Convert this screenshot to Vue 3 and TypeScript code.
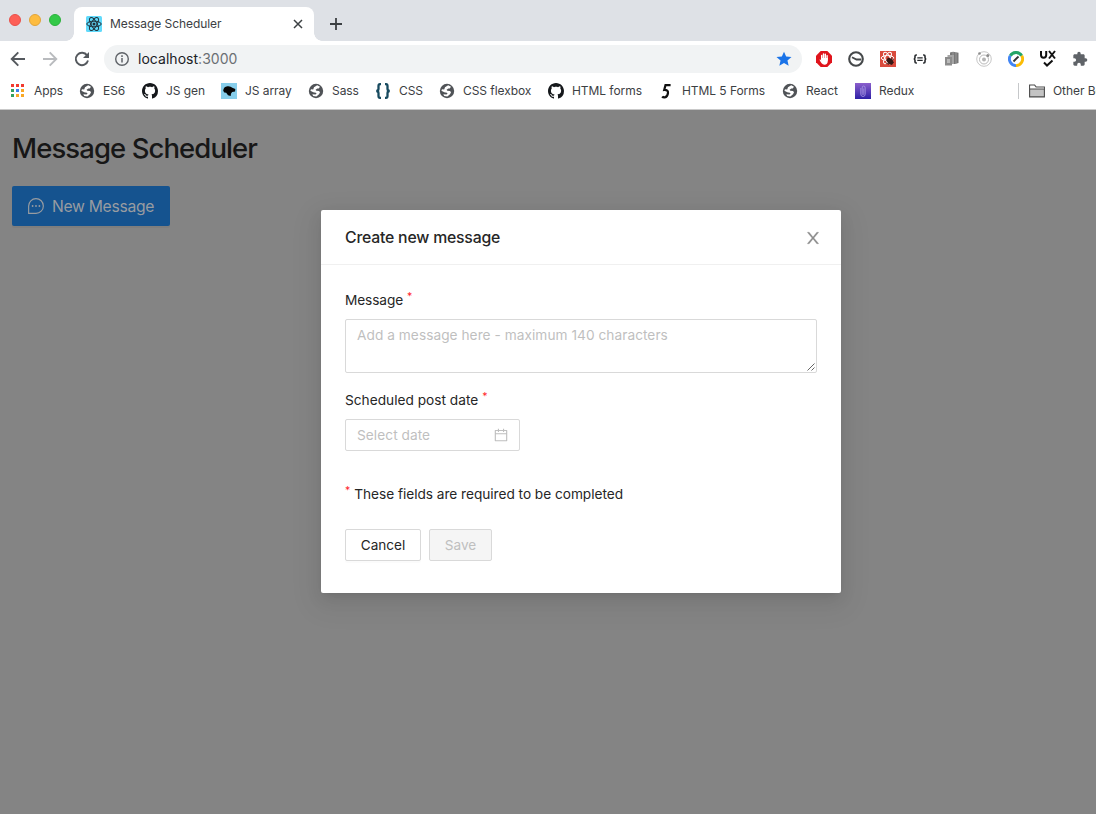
<script setup lang="ts">
interface Bookmark {
  kind: string
  label: string
}

const bookmarks: Bookmark[] = [
  { kind: 'apps', label: 'Apps' },
  { kind: 'globe', label: 'ES6' },
  { kind: 'github', label: 'JS gen' },
  { kind: 'bird', label: 'JS array' },
  { kind: 'globe', label: 'Sass' },
  { kind: 'braces', label: 'CSS' },
  { kind: 'globe', label: 'CSS flexbox' },
  { kind: 'github', label: 'HTML forms' },
  { kind: 'five', label: 'HTML 5 Forms' },
  { kind: 'globe', label: 'React' },
  { kind: 'clip', label: 'Redux' },
]

const appColors = ['#f23a2f', '#f23a2f', '#f23a2f', '#34a060', '#3b82f0', '#f9a825', '#34a060', '#f9a825', '#f9a825']
</script>

<template>
  <div class="window">
    <header class="tabstrip">
      <div class="lights"><i class="red"></i><i class="amber"></i><i class="green"></i></div>
      <div class="tab">
        <svg class="favicon" width="16" height="16" viewBox="0 0 16 16">
          <rect width="16" height="16" rx="1.500" fill="#61dafb" />
          <g fill="none" stroke="#20303a" stroke-width="1">
            <ellipse cx="8" cy="8" rx="7.200" ry="2.800" />
            <ellipse cx="8" cy="8" rx="7.200" ry="2.800" transform="rotate(60 8 8)" />
            <ellipse cx="8" cy="8" rx="7.200" ry="2.800" transform="rotate(120 8 8)" />
          </g>
          <circle cx="8" cy="8" r="1.500" fill="#20303a" />
        </svg>
        <span class="tab-title">Message Scheduler</span>
        <svg class="tab-close" width="10" height="10" viewBox="0 0 10 10"><path d="M1 1l8 8M9 1L1 9" stroke="#3c4043" stroke-width="1.500" /></svg>
      </div>
      <svg class="tab-add" width="12" height="12" viewBox="0 0 12 12"><path d="M6 0v12M0 6h12" stroke="#3c4043" stroke-width="1.800" /></svg>
    </header>

    <div class="toolbar">
      <div class="nav">
        <svg width="16" height="16" viewBox="0 0 16 16" fill="none" stroke="#55595e" stroke-width="1.900"><path d="M15 8H2.200M8.300 1.300L1.700 8l6.600 6.700" /></svg>
        <svg width="16" height="16" viewBox="0 0 16 16" fill="none" stroke="#b9bbbe" stroke-width="1.900"><path d="M1 8h12.800M7.700 1.300L14.300 8l-6.600 6.700" /></svg>
        <svg width="16" height="16" viewBox="0 0 16 16"><path d="M13.100 4.400A6.200 6.200 0 1 0 14 9.600" fill="none" stroke="#55595e" stroke-width="1.900" /><path d="M15 1v6H9z" fill="#55595e" /></svg>
      </div>
      <div class="omnibox">
        <svg width="14" height="14" viewBox="0 0 14 14"><circle cx="7" cy="7" r="6.300" fill="none" stroke="#5f6368" stroke-width="1.400" /><path d="M7 6v4.500M7 3.300v1.600" stroke="#5f6368" stroke-width="1.500" /></svg>
        <span class="url">localhost<span class="port">:3000</span></span>
        <svg class="star" width="16" height="16" viewBox="0 0 16 16"><path d="M8 .7l2.150 4.900 5.350.45-4.050 3.550 1.200 5.250L8 12.050l-4.650 2.800 1.200-5.250L.5 6.050l5.350-.45z" fill="#1a73e8" /></svg>
      </div>
      <div class="extensions">
        <svg viewBox="0 0 16 16"><path d="M4.700 0h6.600L16 4.700v6.600L11.300 16H4.700L0 11.300V4.700z" fill="#e0141c" /><path d="M5.700 8.500V4.400M7.500 7.500V2.900M9.300 7.500V3.100M11.100 9V4.600" stroke="#fff" stroke-width="1.400" stroke-linecap="round" /><path d="M5 7h6.800v3c0 2.200-1.300 3.700-3.300 3.700-2.500 0-3.500-2-5-4.900.6-.6 1.100-.2 1.700.6z" fill="#fff" /></svg>
        <svg viewBox="0 0 16 16"><circle cx="8" cy="8" r="6.800" fill="#fff" stroke="#45484a" stroke-width="2.100" /><path d="M4 6.200l4.500 2.300h4.700" fill="none" stroke="#45484a" stroke-width="1.800" /></svg>
        <svg viewBox="0 0 16 16"><path d="M0 0h16v16H0z" fill="#d94b3d" /><g fill="none" stroke="#fff" stroke-width="1"><ellipse cx="7.500" cy="7" rx="6.300" ry="2.500" /><ellipse cx="7.500" cy="7" rx="6.300" ry="2.500" transform="rotate(60 7.500 7)" /><ellipse cx="7.500" cy="7" rx="6.300" ry="2.500" transform="rotate(120 7.500 7)" /></g><ellipse cx="10" cy="10.200" rx="2.600" ry="3.800" fill="#351916" transform="rotate(-45 10 10.200)" /><path d="M6 9.500l8-1.500M8 14l4-8M6 12.500l8-1M8 6.500l4 7.500" stroke="#351916" stroke-width=".7" /></svg>
        <svg viewBox="0 0 16 16" fill="none" stroke="#26292c" stroke-width="1.600"><path d="M4.900 4H4.200Q3 4 3 5v1.500Q3 8 1.700 8 3 8 3 9.500V11q0 1 1.200 1h.7M11.100 4h.7Q13 4 13 5v1.500Q13 8 14.300 8 13 8 13 9.500V11q0 1-1.200 1h-.7" /><path d="M5.300 6.900h5.400M5.300 9.300h5.400" stroke-width="1.200" /></svg>
        <svg viewBox="0 0 16 16"><path d="M6 1.500L9 .8l5.500 1V12L11 13H6z" fill="#777" /><path d="M9 1v12M12 1v12" stroke="#aaa" stroke-width=".7" /><path d="M3.500 4H10v9H3.500z" fill="#a5a5a5" /><path d="M1 6h7v8.500H1z" fill="#8c8c8c" /><path d="M3 8h3v4H3z" fill="#bababa" /></svg>
        <svg viewBox="0 0 16 16" fill="none" stroke="#b9b9b9"><circle cx="8" cy="8" r="7.300" stroke-width=".8" /><circle cx="8" cy="8.500" r="4.500" stroke-width="1" /><circle cx="8" cy="8.500" r="2" fill="#b5b5b5" stroke="none" /><circle cx="3.500" cy="2.500" r="1.300" fill="#8b8b8b" stroke="none" /><circle cx="11.800" cy="4.600" r="1.500" fill="#8b8b8b" stroke="none" /></svg>
        <svg viewBox="0 0 16 16" fill="none" stroke-width="2.900"><path d="M2.300 4.700A6.600 6.600 0 0 1 13.700 4.700" stroke="#23a566" /><path d="M13.700 4.700A6.600 6.600 0 0 1 8 14.600" stroke="#fbbc05" /><path d="M8 14.600A6.600 6.600 0 0 1 2.300 4.700" stroke="#4285f4" /><path d="M5.500 10.500l5-5" stroke="#333" stroke-width="1.900" /></svg>
        <svg class="ux" viewBox="0 0 16 16" fill="none" stroke="#111" stroke-width="2"><path d="M1 0v4q0 2.700 2.600 2.700T6.200 4V0M9 0l6 7.500M15 0L9 7.500M4 11.500l3 3 5.500-5" /></svg>
        <svg viewBox="0 0 24 24"><path d="M20.500 11H19V7c0-1.100-.9-2-2-2h-4V3.500a2.500 2.500 0 0 0-5 0V5H4c-1.100 0-2 .9-2 2v3.800h1.500a2.700 2.700 0 0 1 0 5.400H2V20c0 1.100.9 2 2 2h3.800v-1.500a2.700 2.700 0 0 1 5.400 0V22H17c1.100 0 2-.9 2-2v-4h1.500a2.500 2.500 0 0 0 0-5z" fill="#5f6368" /></svg>
      </div>
    </div>

    <nav class="bookmarks">
      <div v-for="b in bookmarks" :key="b.label" class="bookmark">
        <svg class="bm-icon" width="16" height="16" viewBox="0 0 16 16">
          <template v-if="b.kind === 'apps'">
            <rect v-for="(c, i) in appColors" :key="i" :x="1 + (i % 3) * 5" :y="1 + Math.floor(i / 3) * 5" width="3" height="3" :fill="c" />
          </template>
          <template v-else-if="b.kind === 'globe'">
            <circle cx="8" cy="8" r="7.200" fill="#505357" />
            <path d="M9.200 2.300L12 3.800 10.700 5.500H9.300L7.600 6.700 8.300 7.700 11 7.900 12 9.200 11 11.300 8.400 13.400 5.200 13 4.300 11.300 7.500 11.600 8.600 10.400 7.800 9.800 5.300 9.300 2.400 7.800 3 6.300 5.200 6.500 6 4.200z" fill="#fff" />
          </template>
          <path v-else-if="b.kind === 'github'" fill="#15181b" d="M8 0C3.580 0 0 3.580 0 8c0 3.540 2.290 6.530 5.470 7.590.4.070.55-.17.55-.38 0-.19-.01-.82-.01-1.490-2.010.37-2.530-.49-2.690-.94-.09-.23-.48-.94-.82-1.130-.28-.15-.68-.52-.01-.53.63-.01 1.080.58 1.230.82.72 1.210 1.870.87 2.330.66.07-.52.28-.87.51-1.070-1.780-.2-3.640-.89-3.640-3.950 0-.87.31-1.590.82-2.150-.08-.2-.36-1.020.08-2.120 0 0 .67-.21 2.200.82.64-.18 1.320-.27 2-.27s1.360.09 2 .27c1.530-1.040 2.200-.82 2.200-.82.44 1.100.16 1.920.08 2.120.51.56.82 1.270.82 2.150 0 3.070-1.870 3.750-3.650 3.950.29.25.54.73.54 1.480 0 1.070-.01 1.930-.01 2.200 0 .21.15.46.55.38A8 8 0 0 0 16 8c0-4.420-3.580-8-8-8z" />
          <template v-else-if="b.kind === 'bird'">
            <path d="M0 0h16v16H0z" fill="#87ceeb" />
            <path d="M2.200 7.800Q2.500 3.500 6.500 3.200q3.200-.3 4.800 1.600l3 1.300-.2 2.300-3 .5Q9.500 10.300 9.700 13L7 12.200 5.200 9.800 3.300 9.500z" fill="#050505" />
          </template>
          <path v-else-if="b.kind === 'braces'" d="M6 1.200H5Q3.500 1.200 3.500 3v2.800Q3.500 8 1.200 8 3.500 8 3.500 10.200V13q0 1.800 1.500 1.800h1M10 1.200h1q1.500 0 1.500 1.800v2.800Q12.500 8 14.800 8 12.500 8 12.500 10.200V13q0 1.800-1.500 1.800h-1" fill="none" stroke="#174a5f" stroke-width="2.300" />
          <path v-else-if="b.kind === 'five'" d="M12.600 2.200H7.500L6.200 7Q10.300 6.700 10 9.900q-.4 4-3.200 4.500Q5 14.600 4.200 13.500" fill="none" stroke="#111" stroke-width="2.200" />
          <template v-else>
            <defs><linearGradient id="clip" x2="0" y2="1"><stop stop-color="#8b5fcc" /><stop offset="1" stop-color="#2e20a6" /></linearGradient></defs>
            <path d="M0 0h16v16H0z" fill="url(#clip)" />
            <path d="M5.800 5v6q0 2.500 2.200 2.500t2.200-2.500V5q0-2-1.600-2T7.200 5v5.500q0 1 .8 1t.8-1V5.500" fill="none" stroke="#a493e0" stroke-width=".9" />
          </template>
        </svg>
        <span>{{ b.label }}</span>
      </div>
      <div class="other">
        <svg width="16" height="14" viewBox="0 0 16 14"><path d="M.6 12.900V1h5l1.600 2h8.200v9.900z" fill="#c4c4c4" stroke="#4b4b4b" stroke-width="1.100" /><path d="M1.200 1.700h4l1.500 2H15V5H1.200z" fill="#fff" /><path d="M1 5h14" stroke="#4b4b4b" /></svg>
        <span>Other Bookmarks</span>
      </div>
    </nav>

    <main class="page">
      <h1>Message Scheduler</h1>
      <button class="new-message">
        <svg width="16" height="16" viewBox="0 0 16 16"><path d="M.65 15.300V8A7.350 7.350 0 1 1 8 15.300z" fill="none" stroke="currentColor" stroke-width="1.150" /><g fill="currentColor"><circle cx="4.600" cy="8" r=".9" /><circle cx="8" cy="8" r=".9" /><circle cx="11.400" cy="8" r=".9" /></g></svg>
        <span>New Message</span>
      </button>

      <section class="modal">
        <div class="modal-head">
          <h2>Create new message</h2>
          <svg class="close" width="18" height="18" viewBox="0 0 1024 1024"><path fill="#8c8c8c" stroke="#8c8c8c" stroke-width="20" d="M563.800 512l262.500-312.900c4.400-5.200.7-13.100-6.100-13.100h-79.800c-4.700 0-9.200 2.100-12.300 5.700L511.600 449.800 295.100 191.700c-3-3.600-7.500-5.700-12.300-5.700H203c-6.800 0-10.500 7.900-6.100 13.100L459.400 512 196.900 824.900A7.950 7.950 0 00203 838h79.800c4.700 0 9.200-2.100 12.300-5.700l216.500-258.100 216.500 258.100c3 3.600 7.500 5.700 12.300 5.700h79.800c6.800 0 10.500-7.900 6.100-13.100L563.800 512z" /></svg>
        </div>
        <div class="modal-body">
          <label class="label"><span class="l-message">Message</span><b class="star-mark">*</b></label>
          <div class="textarea">
            <span class="ph-message">Add a message here - maximum 140 characters</span>
            <svg class="grip" width="8" height="8" viewBox="0 0 8 8"><path d="M.5 7.500l7-7M4.500 7.500l3-3" stroke="#555" stroke-width=".9" /></svg>
          </div>
          <label class="label second"><span class="l-date">Scheduled post date</span><b class="star-mark">*</b></label>
          <div class="date">
            <span class="ph-date">Select date</span>
            <svg width="16" height="16" viewBox="0 0 1024 1024"><path fill="#bfbfbf" d="M880 184H712v-64c0-4.400-3.600-8-8-8h-56c-4.400 0-8 3.600-8 8v64H384v-64c0-4.400-3.600-8-8-8h-56c-4.400 0-8 3.600-8 8v64H144c-17.700 0-32 14.300-32 32v664c0 17.700 14.300 32 32 32h736c17.700 0 32-14.300 32-32V216c0-17.700-14.300-32-32-32zm-40 656H184V460h656v380zM184 392V256h128v48c0 4.400 3.600 8 8 8h56c4.400 0 8-3.600 8-8v-48h256v48c0 4.400 3.600 8 8 8h56c4.400 0 8-3.600 8-8v-48h128v136H184z" /></svg>
          </div>
          <p class="note"><b class="star-mark">*</b><span class="l-note">These fields are required to be completed</span></p>
          <div class="actions">
            <button class="cancel">Cancel</button>
            <button class="save" disabled>Save</button>
          </div>
        </div>
      </section>
    </main>
  </div>
</template>

<style>
html, body { margin: 0; overflow: hidden; }
</style>

<style scoped>
* { box-sizing: border-box; }
svg { display: block; flex: none; }
.window { width: 1096px; height: 814px; overflow: hidden; display: flex; flex-direction: column; background: #fff; font-family: Inter, "Liberation Sans", sans-serif; color: #262626; }
.tabstrip { height: 41px; flex: none; background: #dee1e6; display: flex; }
.lights { width: 74px; padding: 14px 0 0 9px; display: flex; gap: 8px; }
.lights i { width: 12px; height: 12px; border-radius: 50%; border: 1px solid; }
.lights .red { background: #fd5f57; border-color: #e9504a; }
.lights .amber { background: #fdbc40; border-color: #e2a439; }
.lights .green { background: #33c948; border-color: #2bb23c; }
.tab { position: relative; width: 240px; height: 34px; margin-top: 7px; padding: 0 11px 0 12px; border-radius: 8px 8px 0 0; background: #fff; display: flex; align-items: center; }
.tab::before, .tab::after { content: ""; position: absolute; bottom: 0; width: 8px; height: 8px; }
.tab::before { left: -8px; background: radial-gradient(circle at 0 0, transparent 7.500px, #fff 8px); }
.tab::after { right: -8px; background: radial-gradient(circle at 100% 0, transparent 7.500px, #fff 8px); }
.tab-title { margin-left: 8px; padding-bottom: 2px; flex: 1; font-size: 12px; letter-spacing: -0.060px; color: #3c4043; }
.tab-add { margin: 18px 0 0 16px; }
.toolbar { height: 36px; flex: none; display: flex; align-items: center; padding-left: 10px; }
.nav { display: flex; gap: 16px; }
.omnibox { width: 698px; height: 28px; margin-left: 14px; padding: 0 10px 0 11px; border-radius: 14px; background: #f1f3f4; display: flex; align-items: center; }
.url { margin-left: 9px; padding-bottom: 1px; flex: 1; font-size: 14px; letter-spacing: 0.030px; color: #202124; }
.port { color: #6b6f73; }
.extensions { margin-left: 14px; display: flex; gap: 16px; }
.extensions svg { width: 16px; height: 16px; }
.extensions .ux { overflow: visible; }
.bookmarks { height: 33px; flex: none; padding: 0 0 5px 10px; border-bottom: 1px solid #c9c9c9; display: grid; grid-template-columns: 69px 63px 79px 87px 67px 64px 109px 110px 124px 73px 163px auto; align-items: center; font-size: 12px; letter-spacing: -0.060px; color: #3c4043; white-space: nowrap; }
.bookmark { display: flex; align-items: center; gap: 8px; }
.other { height: 16px; border-left: 1px solid #c6c8ca; padding-left: 10px; display: flex; align-items: center; gap: 8px; }
.page { position: relative; flex: 1; padding: 23px 12px; background: #848484; }
h1 { margin: 0; font-size: 27.500px; line-height: 30px; font-weight: 500; letter-spacing: -0.920px; color: #171717; }
button { font-family: inherit; }
.new-message { margin-top: 23px; width: 158px; height: 40px; padding: 0 0 0 16px; border: 0; border-radius: 2px; background: #15538f; color: #989ca1; display: flex; align-items: center; gap: 8px; font-size: 15.700px; letter-spacing: -0.300px; box-shadow: 0 2px 0 rgba(0,0,0,.045); white-space: nowrap; }
.modal { position: absolute; left: 321px; top: 100px; width: 520px; height: 383px; border-radius: 2px; background: #fff; box-shadow: 0 3px 6px -4px rgba(0,0,0,.12), 0 6px 16px rgba(0,0,0,.08), 0 9px 28px 8px rgba(0,0,0,.05); }
.modal-head { height: 55px; padding: 0 19px 0 24px; border-bottom: 1px solid #f0f0f0; display: flex; align-items: center; justify-content: space-between; }
.close { margin-top: 2px; }
h2 { margin: 2px 0 0; font-size: 15.800px; line-height: 22px; font-weight: 500; letter-spacing: -0.200px; }
.modal-body { padding: 24px; font-size: 13.700px; }
.label { height: 22px; line-height: 22px; display: flex; gap: 4px; }
.l-message { letter-spacing: -0.120px; }
.star-mark { color: #ff1f2d; font-size: 10.500px; font-weight: 400; line-height: 16px; }
.textarea { position: relative; height: 54px; margin-top: 8px; padding: 4px 11px; border: 1px solid #d9d9d9; border-radius: 2px; color: #bfbfbf; line-height: 22px; }
.ph-message { letter-spacing: 0.040px; }
.grip { position: absolute; right: 1px; bottom: 1px; }
.second { margin-top: 16px; }
.date { width: 175px; height: 32px; margin-top: 8px; padding: 0 10px 0 11px; border: 1px solid #d9d9d9; border-radius: 2px; color: #bfbfbf; display: flex; align-items: center; justify-content: space-between; }
.ph-date { padding-bottom: 1px; letter-spacing: 0.050px; }
.note { margin: 32px 0 0; line-height: 22px; display: flex; gap: 4px; }
.l-note { letter-spacing: -0.040px; }
.actions { margin-top: 24px; display: flex; gap: 8px; }
.actions button { height: 32px; padding: 0 0 1px; border: 1px solid #d9d9d9; border-radius: 2px; background: #fff; font-size: 13.600px; color: #262626; box-shadow: 0 2px 0 rgba(0,0,0,.016); }
.actions .cancel { width: 76px; }
.actions .save { width: 63px; background: #f5f5f5; color: #bfbfbf; box-shadow: none; }
</style>
